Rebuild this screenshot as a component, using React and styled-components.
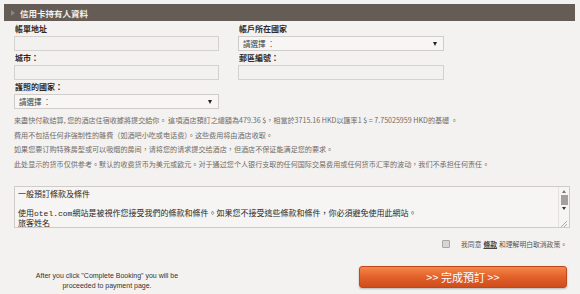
import React from "react";
import styled, { createGlobalStyle } from "styled-components";

const GlobalStyle = createGlobalStyle`
  html, body {
    margin: 0;
    padding: 0;
    background: #f4f2f0;
  }
  body {
    font-family: "Noto Sans CJK TC", "Liberation Sans", sans-serif;
    color: #333;
  }
`;

const Page = styled.div`
  width: 580px;
  height: 294px;
  box-sizing: border-box;
  padding: 4px 5px 0 4px;
  overflow: hidden;
`;

const SectionBar = styled.div`
  height: 17px;
  background: #655c55;
  display: flex;
  align-items: center;
  gap: 5px;
  padding-left: 7px;
  color: #f4efe9;
  font-size: 8.5px;
  font-weight: 700;
`;

const Caret = styled.span`
  width: 0;
  height: 0;
  border-top: 3px solid transparent;
  border-bottom: 3px solid transparent;
  border-left: 4px solid #8d847d;
`;

const FormGrid = styled.div`
  display: grid;
  grid-template-columns: 205px 206px;
  column-gap: 19px;
  row-gap: 2px;
  padding: 3px 0 0 10px;
`;

const Field = styled.div`
  display: flex;
  flex-direction: column;
`;

const Label = styled.label`
  font-size: 8px;
  font-weight: 700;
  line-height: 10px;
  margin: 0 0 2px 1px;
  color: #2f2a27;
`;

const TextInput = styled.div`
  height: 15px;
  box-sizing: border-box;
  border: 1px solid #d5d1ce;
  background: #f3f1ef;
`;

const Select = styled.div`
  height: 15px;
  box-sizing: border-box;
  border: 1px solid #d0ccc9;
  background: #f7f6f5;
  display: flex;
  align-items: center;
  justify-content: space-between;
  padding: 0 6px 0 4px;
  font-size: 7.5px;
  color: #444;
`;

const Arrow = styled.span`
  width: 0;
  height: 0;
  border-left: 2.5px solid transparent;
  border-right: 2.5px solid transparent;
  border-top: 4px solid #222;
`;

const Notes = styled.div`
  margin: 4px 0 0 10px;
  font-size: 7.1px;
  line-height: 14.5px;
  color: #6f6a66;
  white-space: nowrap;
`;

const TermsBox = styled.div`
  margin: 15px 5px 0 10px;
  height: 42px;
  box-sizing: border-box;
  border: 1px solid #cfcbc8;
  background: #f6f5f4;
  display: flex;
`;

const TermsText = styled.div`
  flex: 1;
  padding: 2px 3px 0 3px;
  font-size: 8px;
  line-height: 9.5px;
  color: #2b2724;
  white-space: nowrap;
  overflow: hidden;

  > div {
    height: 9.5px;
  }
`;

const Mono = styled.span`
  font-family: "Liberation Mono", monospace;
  font-size: 8px;
  line-height: 0;
`;

const Scrollbar = styled.div`
  width: 10px;
  border-left: 1px solid #e4e1de;
  display: flex;
  flex-direction: column;
  align-items: center;
  padding-top: 3px;
  gap: 2px;
`;

const ScrollArrow = styled.span`
  width: 0;
  height: 0;
  border-left: 2px solid transparent;
  border-right: 2px solid transparent;
  ${(p) => (p.$up ? "border-bottom: 3px solid #777;" : "border-top: 3px solid #333;")}
`;

const Thumb = styled.div`
  width: 7px;
  height: 10px;
  background: #a3a09d;
`;

const Grip = styled.div`
  margin-top: auto;
  width: 6px;
  height: 6px;
  background: linear-gradient(135deg, transparent 45%, #aaa 45%, #aaa 55%, transparent 55%, transparent 70%, #aaa 70%, #aaa 80%, transparent 80%);
`;

const AgreeRow = styled.div`
  display: flex;
  justify-content: flex-end;
  align-items: center;
  gap: 11px;
  margin: 11px 8px 0 0;
  font-size: 6.8px;
  color: #555;
`;

const CheckBox = styled.span`
  width: 6px;
  height: 6px;
  border: 1px solid #a9a6a3;
  border-radius: 1px;
  background: #d8d6d4;
`;

const TermLink = styled.span`
  font-weight: 700;
  text-decoration: underline;
  color: #444;
  margin: 0 2px;
`;

const Footer = styled.div`
  display: flex;
  align-items: center;
  justify-content: space-between;
  margin: 15px 8px 0 0;
`;

const PayNote = styled.div`
  width: 206px;
  text-align: center;
  font-family: "Liberation Sans", sans-serif;
  font-size: 7px;
  line-height: 9.5px;
  color: #333;
  padding-top: 7px;
`;

const BookButton = styled.button`
  width: 208px;
  height: 22px;
  border: 1px solid #c2461c;
  border-radius: 3px;
  background: linear-gradient(#f4874a, #e2612a 50%, #cf4c1c);
  box-shadow: 0 1px 2px rgba(0, 0, 0, 0.25);
  color: #fff;
  font-family: "Noto Sans CJK TC", "Liberation Sans", sans-serif;
  font-size: 11px;
  padding: 0;
`;

export default function App() {
  return (
    <>
      <GlobalStyle />
      <Page>
        <SectionBar>
          <Caret />
          信用卡持有人資料
        </SectionBar>
        <FormGrid>
          <Field>
            <Label>帳單地址</Label>
            <TextInput />
          </Field>
          <Field>
            <Label>帳戶所在國家</Label>
            <Select>
              請選擇 ：<Arrow />
            </Select>
          </Field>
          <Field>
            <Label>城市：</Label>
            <TextInput />
          </Field>
          <Field>
            <Label>郵區編號：</Label>
            <TextInput />
          </Field>
          <Field>
            <Label>護照的國家：</Label>
            <Select>
              請選擇 ：<Arrow />
            </Select>
          </Field>
        </FormGrid>
        <Notes>
          <div>來盡快付款結算, 您的酒店住宿收據將提交給你。 這項酒店預訂之總額為479.36 $，相當於3715.16 HKD以匯率1 $ = 7.75025959 HKD的基礎 。</div>
          <div>費用不包括任何非強制性的雜費（如酒吧小吃或电话费）。这些费用将由酒店收取。</div>
          <div>如果您要订购特殊房型或可以吸烟的房间，请将您的请求提交给酒店，但酒店不保证能满足您的要求。</div>
          <div>此处显示的货币仅供参考。默认的收费货币为美元或欧元。对于通过您个人银行支取的任何国际交易费用或任何货币汇率的波动，我们不承担任何责任。</div>
        </Notes>
        <TermsBox>
          <TermsText>
            <div>一般預訂條款及條件</div>
            <div>&nbsp;</div>
            <div>
              使用<Mono>otel.com</Mono>網站是被視作您接受我們的條款和條件。如果您不接受這些條款和條件，你必須避免使用此網站。
            </div>
            <div>旅客姓名</div>
          </TermsText>
          <Scrollbar>
            <ScrollArrow $up />
            <Thumb />
            <ScrollArrow />
            <Grip />
          </Scrollbar>
        </TermsBox>
        <AgreeRow>
          <CheckBox />
          <span>
            我同意<TermLink>條款</TermLink>和理解明白取消政策。
          </span>
        </AgreeRow>
        <Footer>
          <PayNote>
            After you click "Complete Booking" you will be
            <br />
            proceeded to payment page.
          </PayNote>
          <BookButton>&gt;&gt; 完成預訂 &gt;&gt;</BookButton>
        </Footer>
      </Page>
    </>
  );
}
